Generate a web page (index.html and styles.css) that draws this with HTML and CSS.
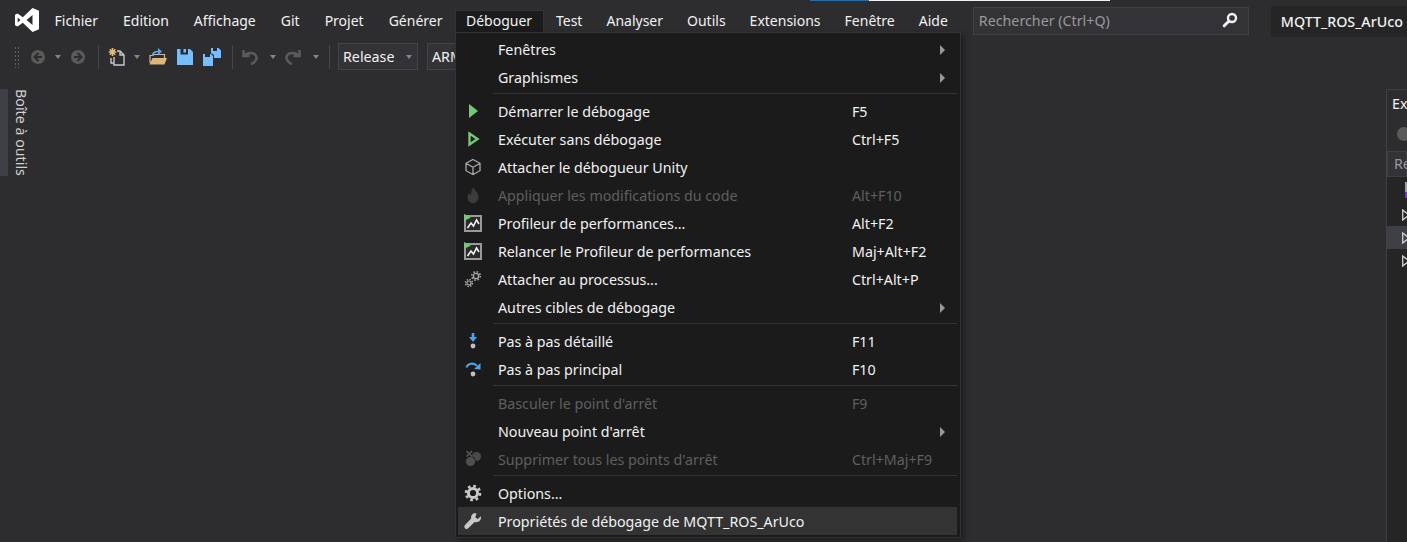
FILE: index.html
```html
<!DOCTYPE html>
<html lang="fr">
<head>
    <meta charset="UTF-8">
    <title>MQTT_ROS_ArUco</title>
    <link rel="stylesheet" href="styles.css">
</head>
<body>
    <div class="sliver"><span class="sliver-blue"></span><span class="sliver-white"></span></div>

    <header class="menubar">
        <svg class="logo" width="26" height="26" viewBox="0 0 26 26"><path fill="#fff" fill-rule="evenodd" d="M18.5 1 L25 3.8 V22.2 L18.5 25 L8.8 15.8 L3.6 19.6 L1 18.3 V7.7 L3.6 6.4 L8.8 10.2 Z M18.5 8 L12.6 13 L18.5 18 Z M3.7 10.4 V15.6 L6.4 13 Z"/></svg>
        <nav class="menus">
            <a class="menu">Fichier</a>
            <a class="menu">Edition</a>
            <a class="menu">Affichage</a>
            <a class="menu">Git</a>
            <a class="menu">Projet</a>
            <a class="menu">Générer</a>
            <div class="menu menu-open">
                Déboguer
                <div class="dropdown">
                    <div class="row"><span class="ico"></span><span>Fenêtres</span><span></span><i class="arrow"></i></div>
                    <div class="row"><span class="ico"></span><span>Graphismes</span><span></span><i class="arrow"></i></div>
                    <div class="sep"></div>
                    <div class="row"><span class="ico"><svg width="18" height="18" viewBox="0 0 18 18"><polygon fill="#75c776" points="5,2 14,9 5,16"/></svg></span><span>Démarrer le débogage</span><span>F5</span></div>
                    <div class="row"><span class="ico"><svg width="18" height="18" viewBox="0 0 18 18"><path fill="#1b1b1c" stroke="#75c776" stroke-width="2.4" d="M5.5 3.6 L13.5 9 L5.5 14.4 Z"/></svg></span><span>Exécuter sans débogage</span><span>Ctrl+F5</span></div>
                    <div class="row"><span class="ico"><svg width="18" height="18" viewBox="0 0 18 18"><path fill="none" stroke="#a8a8a8" stroke-width="1.3" d="M9 1.5 L16 5.3 V12.7 L9 16.5 L2 12.7 V5.3 Z M2 5.3 L9 9.2 L16 5.3 M9 9.2 V16.5"/></svg></span><span>Attacher le débogueur Unity</span><span></span></div>
                    <div class="row off"><span class="ico"><svg width="18" height="18" viewBox="0 0 18 18"><path fill="#3c3c3c" d="M9.5 1 C10 4.5 14.5 6 14.5 11 C14.5 14.5 12 17 9 17 C6 17 3.5 14.5 3.5 11.2 C3.5 9.2 4.5 7.8 5.5 6.8 C5.7 8.2 6.3 9 7 9.4 C6.8 6.5 8 3.5 9.5 1 Z"/></svg></span><span>Appliquer les modifications du code</span><span>Alt+F10</span></div>
                    <div class="row"><span class="ico"><svg width="18" height="18" viewBox="0 0 18 18"><rect x="1" y="2" width="16" height="15" fill="#2a2a2c" stroke="#9a9a9a" stroke-width="2"/><path fill="none" stroke="#f1f1f1" stroke-width="1.6" d="M3.5 14 L7 9 L9.5 12 L12.5 6 L15 10"/><polygon fill="#75c776" points="0,0 7,3.5 0,7"/></svg></span><span>Profileur de performances...</span><span>Alt+F2</span></div>
                    <div class="row"><span class="ico"><svg width="18" height="18" viewBox="0 0 18 18"><rect x="1" y="2" width="16" height="15" fill="#2a2a2c" stroke="#9a9a9a" stroke-width="2"/><path fill="none" stroke="#f1f1f1" stroke-width="1.6" d="M3.5 14 L7 9 L9.5 12 L12.5 6 L15 10"/><polygon fill="#75c776" points="0,0 7,3.5 0,7"/></svg></span><span>Relancer le Profileur de performances</span><span>Maj+Alt+F2</span></div>
                    <div class="row"><span class="ico"><svg width="18" height="18" viewBox="0 0 18 18"><g fill="none" stroke="#a8a8a8"><circle cx="12" cy="6" r="2.6" stroke-width="1.3"/><circle cx="12" cy="6" r="4.2" stroke-width="1.6" stroke-dasharray="1.6 1.7"/><circle cx="5" cy="13" r="2" stroke-width="1.2"/><circle cx="5" cy="13" r="3.5" stroke-width="1.5" stroke-dasharray="1.4 1.35"/></g></svg></span><span>Attacher au processus...</span><span>Ctrl+Alt+P</span></div>
                    <div class="row"><span class="ico"></span><span>Autres cibles de débogage</span><span></span><i class="arrow"></i></div>
                    <div class="sep"></div>
                    <div class="row"><span class="ico"><svg width="18" height="18" viewBox="0 0 18 18"><path fill="#4da3ea" d="M7.7 1 H10.3 V5 H13 L9 10 L5 5 H7.7 Z"/><circle cx="9" cy="14" r="2.4" fill="#c0c0c0"/></svg></span><span>Pas à pas détaillé</span><span>F11</span></div>
                    <div class="row"><span class="ico"><svg width="18" height="18" viewBox="0 0 18 18"><path fill="none" stroke="#4da3ea" stroke-width="2" d="M2.5 7.5 C3.5 3.5 10 2 13 6"/><polygon fill="#4da3ea" points="16.5,3 16.5,9.5 10,9"/><circle cx="9" cy="14" r="2.4" fill="#c0c0c0"/></svg></span><span>Pas à pas principal</span><span>F10</span></div>
                    <div class="sep"></div>
                    <div class="row off"><span class="ico"></span><span>Basculer le point d'arrêt</span><span>F9</span></div>
                    <div class="row"><span class="ico"></span><span>Nouveau point d'arrêt</span><span></span><i class="arrow"></i></div>
                    <div class="row off"><span class="ico"><svg width="18" height="18" viewBox="0 0 18 18"><circle cx="12.5" cy="6.5" r="4.6" fill="#4a4a4a"/><circle cx="6.5" cy="11.5" r="5" fill="#4f4f4f" stroke="#1b1b1c"/><path stroke="#5a5a5a" stroke-width="1.4" d="M2.5 1 L8 6.5 M8 1 L2.5 6.5"/></svg></span><span>Supprimer tous les points d'arrêt</span><span>Ctrl+Maj+F9</span></div>
                    <div class="sep"></div>
                    <div class="row"><span class="ico"><svg width="18" height="18" viewBox="0 0 18 18"><g fill="none" stroke="#c8c8c8"><circle cx="9" cy="9" r="4.6" stroke-width="3"/><circle cx="9" cy="9" r="7" stroke-width="2.6" stroke-dasharray="2.75 2.75"/></g></svg></span><span>Options...</span><span></span></div>
                    <div class="row row-on"><span class="ico"><svg width="18" height="18" viewBox="0 0 18 18"><path fill="#c8c8c8" d="M17 4.2 L13.7 7 L11.3 5.5 L12.5 1.6 C9.5 0.6 6.6 2.8 7.2 6.6 L1 13 C0 14 0.3 15.6 1.2 16.4 C2 17.2 3.4 17.2 4.3 16.3 L10.6 9.9 C14.4 11 17.6 8.2 17 4.2 Z"/></svg></span><span>Propriétés de débogage de MQTT_ROS_ArUco</span><span></span></div>
                </div>
            </div>
            <a class="menu menu-after">Test</a>
            <a class="menu menu-after">Analyser</a>
            <a class="menu menu-after">Outils</a>
            <a class="menu menu-after">Extensions</a>
            <a class="menu menu-after">Fenêtre</a>
            <a class="menu menu-after">Aide</a>
        </nav>
        <div class="search">
            <span>Rechercher (Ctrl+Q)</span>
            <svg width="16" height="16" viewBox="0 0 16 16"><circle cx="10" cy="6" r="4" fill="none" stroke="#f1f1f1" stroke-width="2.4"/><path stroke="#f1f1f1" stroke-width="3" stroke-linecap="round" d="M6.8 9.2 L2.2 13.8"/></svg>
        </div>
        <div class="solution">MQTT_ROS_ArUco</div>
    </header>

    <div class="toolbar">
        <span class="grip"></span>
        <div class="tb-group tb-first">
            <svg width="14" height="14" viewBox="0 0 14 14"><circle cx="7" cy="7" r="7" fill="#5a5a5a"/><path fill="none" stroke="#2d2d30" stroke-width="2" d="M7.5 3 L3.5 7 L7.5 11 M3.5 7 H11"/></svg>
            <i class="caret"></i>
            <svg width="14" height="14" viewBox="0 0 14 14"><circle cx="7" cy="7" r="7" fill="#5a5a5a"/><path fill="none" stroke="#2d2d30" stroke-width="2" d="M6.5 3 L10.5 7 L6.5 11 M10.5 7 H3"/></svg>
        </div>
        <span class="tb-sep"></span>
        <div class="tb-pair">
            <svg width="17" height="18" viewBox="0 0 17 18"><path fill="none" stroke="#c8c8c8" stroke-width="1.4" d="M9 3 H12 L16 7 V17 H6 V9 M3 10 V15 H6 M12 3 V7 H16"/><path stroke="#e8b878" stroke-width="1.6" d="M4.5 0 V8 M0.7 4 H8.3 M1.8 1.3 L7.2 6.7 M7.2 1.3 L1.8 6.7"/></svg>
            <i class="caret"></i>
        </div>
        <div class="tb-group tb-files">
            <svg width="18" height="18" viewBox="0 0 18 18"><path fill="none" stroke="#dcb67a" stroke-width="1.2" d="M1 15 V7.5 H4 L5 6.5 H15.5 V10"/><path fill="#dcb67a" d="M0.5 16.5 L3.5 10 H18 L15.5 16.5 Z"/><path fill="none" stroke="#5aa7e8" stroke-width="1.7" d="M3.5 8 C3.5 4.5 6 3.5 9.5 3.5"/><path fill="#5aa7e8" d="M9 0 L13 3.5 L9 7 Z"/></svg>
            <svg width="16" height="16" viewBox="0 0 16 16"><path fill="#75beff" d="M0 0 H3.5 V5.5 H11 V0 H13 L16 3 V16 H0 Z"/><rect x="6.5" y="0" width="2.5" height="3.5" fill="#75beff"/></svg>
            <svg width="18" height="18" viewBox="0 0 18 18"><path fill="#75beff" d="M8 0 H10 V3 H14 V0 H15.5 L18 2.5 V10 H11 V7 L9 5.5 H8 Z M0 6 H2 V9 H7 V6 H8 L10 8 V18 H0 Z"/></svg>
        </div>
        <span class="tb-sep tb-sep-files"></span>
        <div class="tb-pair tb-undo">
            <svg width="16" height="17" viewBox="0 0 16 17"><path fill="none" stroke="#5a5a5a" stroke-width="2.6" d="M1.5 2 V8 H7.5 M2 8 C5 4 13 3.5 14.5 9 C15 12 12 15 9 16"/></svg>
            <i class="caret"></i>
        </div>
        <div class="tb-pair tb-undo">
            <svg width="16" height="17" viewBox="0 0 16 17"><path fill="none" stroke="#5a5a5a" stroke-width="2.6" d="M14.5 2 V8 H8.5 M14 8 C11 4 3 3.5 1.5 9 C1 12 4 15 7 16"/></svg>
            <i class="caret"></i>
        </div>
        <span class="tb-sep"></span>
        <div class="combo combo-config">Release<i class="caret"></i></div>
        <div class="combo">ARM</div>
    </div>

    <main class="workspace">
        <aside class="toolbox">
            <span class="toolbox-tab"></span>
            <span class="toolbox-label">Boîte à outils</span>
        </aside>
        <div class="editor"></div>
        <section class="explorer">
            <div class="explorer-title">Ex</div>
            <div class="explorer-tools"><span class="explorer-back"></span></div>
            <div class="explorer-search">Re</div>
            <div class="tree">
                <div class="tree-row tree-root"><span class="sol-icon"></span></div>
                <div class="tree-row"><svg class="twisty" width="5" height="12" viewBox="0 0 5 12"><path fill="none" stroke="#d0d0d0" stroke-width="1.3" d="M0.7 1 L7 6 L0.7 11 Z"/></svg></div>
                <div class="tree-row tree-row-on"><svg class="twisty" width="5" height="12" viewBox="0 0 5 12"><path fill="none" stroke="#d0d0d0" stroke-width="1.3" d="M0.7 1 L7 6 L0.7 11 Z"/></svg></div>
                <div class="tree-row"><svg class="twisty" width="5" height="12" viewBox="0 0 5 12"><path fill="none" stroke="#d0d0d0" stroke-width="1.3" d="M0.7 1 L7 6 L0.7 11 Z"/></svg></div>
            </div>
        </section>
    </main>
</body>
</html>
```

FILE: styles.css
```css
* {
    box-sizing: border-box;
}
html, body {
    height: 100%;
}
body {
    margin: 0;
    overflow: hidden;
    display: flex;
    flex-direction: column;
    background: #2d2d30;
    color: #f1f1f1;
    font-family: "Noto Sans", "Open Sans", sans-serif;
    font-size: 14.25px;
}

.sliver {
    display: flex;
    height: 1px;
    padding-left: 810px;
}
.sliver-blue {
    width: 59px;
    background: #0078d7;
}
.sliver-white {
    width: 241px;
    background: #f1f1f1;
}

.menubar {
    display: flex;
    align-items: flex-start;
    height: 41px;
    padding: 5px 0 0 14px;
}
.logo {
    flex: none;
    margin-top: 1px;
}
.menus {
    display: flex;
    margin: 4px 0 0 2px;
    font-size: 14px;
}
.menu {
    position: relative;
    height: 22px;
    line-height: 21px;
    padding: 0 12.5px;
    white-space: nowrap;
}
.menu-after {
    padding: 0 12px;
}
.menu-open {
    width: 89px;
    background: #1b1b1c;
    border: 1px solid #333337;
    border-bottom: 0;
    line-height: 20px;
    padding: 0 10px;
    z-index: 2;
}

.dropdown {
    position: absolute;
    top: 21px;
    left: -1px;
    width: 506px;
    height: 506px;
    padding: 2px 3px 2px 2px;
    background: #1b1b1c;
    border: 1px solid #333337;
    box-shadow: 3px 3px 6px rgba(0, 0, 0, 0.35);
    font-size: 14.25px;
    line-height: 28px;
}
.row {
    display: grid;
    grid-template-columns: 40px 354px 88px 1fr;
    align-items: center;
    height: 28px;
    width: 499px;
    padding-top: 1px;
}
.row-on {
    background: #333334;
}
.off {
    color: #5f5f5f;
}
.ico {
    display: flex;
    align-items: center;
    align-self: start;
    height: 28px;
    margin-top: -1px;
    padding-left: 6px;
}
.arrow {
    width: 0;
    height: 0;
    border-left: 5px solid #999;
    border-top: 5px solid transparent;
    border-bottom: 5px solid transparent;
}
.sep {
    height: 1px;
    width: 464px;
    margin: 2px 0 3px 35px;
    background: #333337;
}

.search {
    display: flex;
    align-items: center;
    justify-content: space-between;
    flex: none;
    width: 276px;
    height: 28px;
    margin: 1px 0 0 13px;
    padding: 0 10px 2px 5px;
    background: #333337;
    border: 1px solid #3f3f46;
    color: #999;
}
.solution {
    flex: none;
    width: 136px;
    height: 31px;
    margin-left: 22px;
    padding-left: 10px;
    background: #252526;
    line-height: 31px;
    font-weight: 500;
    white-space: nowrap;
}

.toolbar {
    display: flex;
    align-items: center;
    flex: none;
    height: 29px;
    padding-left: 14px;
}
.grip {
    width: 6px;
    height: 22px;
    background-image: radial-gradient(#5f5f5f 1px, transparent 1px);
    background-size: 3px 4px;
}
.tb-group, .tb-pair {
    display: flex;
    align-items: center;
    gap: 10px;
}
.tb-first {
    margin-left: 11px;
}
.tb-pair {
    gap: 9px;
    margin-left: 9px;
}
.tb-files {
    margin-left: 9px;
}
.tb-undo {
    gap: 12px;
}
.tb-sep {
    width: 1px;
    height: 24px;
    margin-left: 10px;
    background: #46464a;
}
.tb-first + .tb-sep {
    margin-left: 13px;
}
.tb-sep-files {
    margin-left: 11px;
}
.caret {
    flex: none;
    width: 0;
    height: 0;
    border-top: 4px solid #858585;
    border-left: 3.5px solid transparent;
    border-right: 3.5px solid transparent;
}
.combo {
    display: flex;
    align-items: center;
    justify-content: space-between;
    flex: none;
    width: 80px;
    height: 27px;
    margin-left: 9px;
    padding: 0 5px 0 4px;
    background: #333337;
    border: 1px solid #434346;
    white-space: nowrap;
}
.combo-config {
    margin-left: 8px;
}

.workspace {
    display: flex;
    flex: 1;
    min-height: 0;
    padding-top: 18px;
}
.toolbox {
    display: flex;
    align-items: flex-start;
    flex: none;
}
.toolbox-tab {
    width: 8px;
    height: 87px;
    background: #3f3f46;
}
.toolbox-label {
    margin-left: 5px;
    writing-mode: vertical-rl;
    line-height: 16px;
    color: #d0d0d0;
    white-space: nowrap;
}
.editor {
    flex: 1;
}
.explorer {
    flex: none;
    width: 21px;
    overflow: hidden;
    border-left: 1px solid #3f3f46;
    border-top: 1px solid #3f3f46;
    white-space: nowrap;
}
.explorer-title {
    height: 28px;
    padding-left: 5px;
    line-height: 28px;
}
.explorer-tools {
    height: 33px;
    padding: 9px 0 0 10px;
}
.explorer-back {
    display: block;
    width: 14px;
    height: 14px;
    border-radius: 50%;
    background: #5a5a5a;
}
.explorer-search {
    height: 26px;
    padding-left: 6px;
    background: #333337;
    border: 1px solid #3f3f46;
    line-height: 24px;
    color: #999;
}
.tree {
    height: 100%;
    background: #252526;
}
.tree-row {
    height: 23px;
    padding-left: 15px;
    display: flex;
    align-items: center;
}
.tree-root {
    height: 26px;
    padding-left: 18px;
}
.tree-row-on {
    background: #3f3f46;
}
.sol-icon {
    width: 3px;
    height: 16px;
    background: linear-gradient(#a0a0a0 60%, #6a3fb5 60%);
}
.twisty {
    flex: none;
}
```
